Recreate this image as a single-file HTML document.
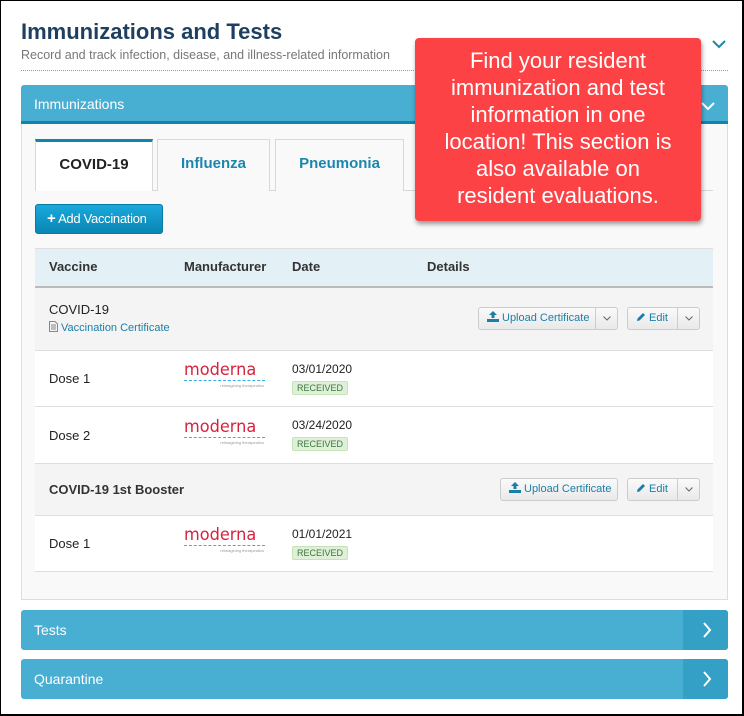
<!DOCTYPE html>
<html><head><style>
*{box-sizing:border-box;margin:0;padding:0}
body{width:744px;height:716px;position:relative;background:#fff;font-family:"Liberation Sans",Arial,sans-serif;overflow:hidden}
.a{position:absolute}
.frame{left:0;top:0;width:744px;height:716px;border:1px solid #000;border-bottom-width:2px;border-right-width:2px}
.bar{left:21px;width:707px;background:#48afd3;color:#fff;font-size:14px;border-radius:3px}
.bar span{position:absolute;left:13px}
.seg{position:absolute;right:0;top:0;bottom:0;width:45px;background:#34a0c6;border-radius:0 3px 3px 0}
.tab{top:139px;height:52px;border:1px solid #d8d8d8;border-bottom:none;background:#f9f9f9;font-size:15px;font-weight:bold;color:#1c86ad;text-align:center;line-height:48px}
.th{top:259px;font-size:13px;font-weight:bold;color:#333}
.row{left:35px;width:678px;border-bottom:1px solid #ddd}
.t13{font-size:13px;color:#222}
.mod{font-family:"DejaVu Sans",sans-serif;font-size:17px;font-weight:normal;color:#d6233d;letter-spacing:0;line-height:18px;transform:scaleX(0.95);transform-origin:left}
.modl{width:81px;border-top:1px dashed #3ab0e0;margin-top:1px}
.modt{font-size:4px;color:#999;text-align:right;width:80px;margin-top:2px}
.rec{font-size:9px;color:#3c763d;background:#dff0d8;border:1px solid #c4e3b6;border-radius:2px;padding:1px 4px;display:inline-block;margin-top:5px}
.btn{height:23px;border:1px solid #ccc;border-radius:3px;background:linear-gradient(#fafafa,#e9e9e9);font-size:11px;color:#1a7fa8;line-height:21px}
.btn .c{position:absolute;right:0;top:0;bottom:0;width:22px;border-left:1px solid #ccc}
.btn .c svg{position:absolute;left:7px;top:8px}
.ico{display:inline-block;vertical-align:-1px;margin-right:3px}
</style></head><body>
<div class="a frame"></div>
<div class="a" style="left:21px;top:19px;font-size:22px;font-weight:bold;color:#1e3f5f">Immunizations and Tests</div>
<div class="a" style="left:21px;top:48px;font-size:12.5px;color:#777">Record and track infection, disease, and illness-related information</div>
<div class="a" style="left:21px;top:70px;width:707px;border-top:1px dotted #999"></div>
<svg class="a" style="left:712px;top:39px" width="14" height="10"><path d="M1 2 L7 8 L13 2" fill="none" stroke="#1c86ad" stroke-width="2"/></svg>

<div class="a bar" style="top:85px;height:39px;border-bottom:3px solid #0f85ae;border-radius:3px 3px 0 0"><span style="top:11px">Immunizations</span></div>
<svg class="a" style="left:701px;top:101px" width="14" height="10"><path d="M1 2 L7 8 L13 2" fill="none" stroke="#fff" stroke-width="2"/></svg>
<div class="a" style="left:21px;top:124px;width:707px;height:476px;background:#f9f9f9;border:1px solid #ddd;border-top:none"></div>
<div class="a" style="left:35px;top:190px;width:678px;border-top:1px solid #d8d8d8"></div>
<div class="a tab" style="left:35px;width:118px;background:#fff;border-top:3px solid #0f85ae;color:#222;height:52px;line-height:46px">COVID-19</div>
<div class="a tab" style="left:157px;width:113px">Influenza</div>
<div class="a tab" style="left:275px;width:129px">Pneumonia</div>
<div class="a" style="left:35px;top:204px;width:128px;height:30px;border-radius:3px;background:linear-gradient(#19a9dc,#0a86b2);border:1px solid #0a7aa3;color:#fff;font-size:13px;line-height:28px;padding-left:11px;letter-spacing:-0.3px"><b style="font-size:15px">+</b> Add Vaccination</div>

<div class="a" style="left:35px;top:248px;width:678px;height:40px;background:#e3f0f6;border-top:1px solid #ddd;border-bottom:2px solid #bbb"></div>
<div class="a th" style="left:49px">Vaccine</div>
<div class="a th" style="left:184px">Manufacturer</div>
<div class="a th" style="left:292px">Date</div>
<div class="a th" style="left:427px">Details</div>

<div class="a row" style="top:288px;height:63px;background:#f4f4f4"></div>
<div class="a t13" style="left:49px;top:302px">COVID-19</div>
<div class="a" style="left:49px;top:321px;font-size:11px;color:#1a7fa8"><svg class="ico" width="9" height="11"><path d="M0.5 0.5H6L8.5 3V10.5H0.5Z M2 4H7 M2 6H7 M2 8H7" fill="none" stroke="#888" stroke-width="1"/></svg>Vaccination Certificate</div>
<div class="a btn" style="left:478px;top:307px;width:140px;padding-left:8px"><svg class="ico" width="12" height="11"><path d="M6 0L10 4H7.5V7H4.5V4H2Z M0 8H12V11H0Z" fill="#1a7fa8"/></svg>Upload Certificate<span class="c"><svg width="8" height="5"><path d="M0.5 0.5L4 4L7.5 0.5" fill="none" stroke="#666"/></svg></span></div>
<div class="a btn" style="left:627px;top:307px;width:73px;padding-left:8px"><svg class="ico" width="10" height="10"><path d="M1 9L1.5 6.5L7 1L9 3L3.5 8.5Z" fill="#1a7fa8"/></svg>Edit<span class="c"><svg width="8" height="5"><path d="M0.5 0.5L4 4L7.5 0.5" fill="none" stroke="#666"/></svg></span></div>

<div class="a row" style="top:351px;height:56px;background:#fff"></div>
<div class="a t13" style="left:49px;top:371px">Dose 1</div>
<div class="a" style="left:184px;top:361px"><div class="mod">moderna</div><div class="modl"></div><div class="modt">reimagining therapeutics</div></div>
<div class="a" style="left:292px;top:362px"><div class="t13" style="font-size:12px">03/01/2020</div><div class="rec">RECEIVED</div></div>

<div class="a row" style="top:407px;height:57px;background:#fff"></div>
<div class="a t13" style="left:49px;top:428px">Dose 2</div>
<div class="a" style="left:184px;top:418px"><div class="mod">moderna</div><div class="modl"></div><div class="modt">reimagining therapeutics</div></div>
<div class="a" style="left:292px;top:418px"><div class="t13" style="font-size:12px">03/24/2020</div><div class="rec">RECEIVED</div></div>

<div class="a row" style="top:464px;height:52px;background:#f4f4f4"></div>
<div class="a t13" style="left:49px;top:482px;font-weight:bold;color:#333">COVID-19 1st Booster</div>
<div class="a btn" style="left:500px;top:478px;width:118px;padding-left:8px"><svg class="ico" width="12" height="11"><path d="M6 0L10 4H7.5V7H4.5V4H2Z M0 8H12V11H0Z" fill="#1a7fa8"/></svg>Upload Certificate</div>
<div class="a btn" style="left:627px;top:478px;width:73px;padding-left:8px"><svg class="ico" width="10" height="10"><path d="M1 9L1.5 6.5L7 1L9 3L3.5 8.5Z" fill="#1a7fa8"/></svg>Edit<span class="c"><svg width="8" height="5"><path d="M0.5 0.5L4 4L7.5 0.5" fill="none" stroke="#666"/></svg></span></div>

<div class="a row" style="top:516px;height:56px;background:#fff"></div>
<div class="a t13" style="left:49px;top:536px">Dose 1</div>
<div class="a" style="left:184px;top:526px"><div class="mod">moderna</div><div class="modl"></div><div class="modt">reimagining therapeutics</div></div>
<div class="a" style="left:292px;top:527px"><div class="t13" style="font-size:12px">01/01/2021</div><div class="rec">RECEIVED</div></div>

<div class="a bar" style="top:610px;height:40px"><span style="top:12px">Tests</span><div class="seg"></div></div>
<svg class="a" style="left:702px;top:622px" width="10" height="16"><path d="M2 1 L8 8 L2 15" fill="none" stroke="#fff" stroke-width="2"/></svg>
<div class="a bar" style="top:659px;height:40px"><span style="top:12px">Quarantine</span><div class="seg"></div></div>
<svg class="a" style="left:702px;top:671px" width="10" height="16"><path d="M2 1 L8 8 L2 15" fill="none" stroke="#fff" stroke-width="2"/></svg>

<div class="a" style="left:415px;top:38px;width:286px;height:183px;background:#fd4245;border-radius:4px;box-shadow:1px 3px 5px rgba(0,0,0,.4);color:#fff;font-size:22px;line-height:27px;text-align:center;padding-top:9px;white-space:nowrap">Find your resident<br>immunization and test<br>information in one<br>location! This section is<br>also available on<br>resident evaluations.</div>
</body></html>
